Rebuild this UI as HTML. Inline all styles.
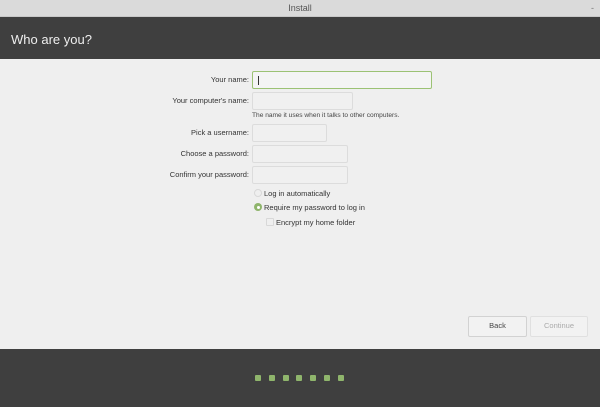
<!DOCTYPE html>
<html><head><style>
*{margin:0;padding:0;box-sizing:border-box}
body{width:600px;height:407px;background:#efefef;font-family:"Liberation Sans","DejaVu Sans",sans-serif;position:relative;overflow:hidden}
.a{position:absolute}
.tb{left:0;top:0;width:600px;height:17px;background:#dadada;border-bottom:1px solid #c8c8c8;text-align:center;font-size:9px;color:#555;line-height:16px}
.hd{left:0;top:17px;width:600px;height:42px;background:#3f3f3f;color:#eee;font-size:13px;padding:15px 0 0 11px}
.ft{left:0;top:349px;width:600px;height:58px;background:#3f3f3f}
.lbl{font-size:7.5px;color:#333;text-align:right;width:140px;left:109px}
.in{background:#f0f0f0;border:1px solid #dcdcdc;border-radius:2px}
.dot{width:6px;height:6px;background:#8fb56c;border-radius:1px;top:375px}
.btn{border:1px solid #d2d2d2;border-radius:2px;background:#f2f2f2;font-size:7.5px;text-align:center;line-height:18px}
.s{font-size:7.5px;color:#333}
</style></head><body>
<div class="a tb">Install<span style="position:absolute;right:6px;color:#777">-</span></div>
<div class="a hd">Who are you?</div>
<div class="a lbl" style="top:75px">Your name:</div>
<div class="a in" style="left:252px;top:71px;width:180px;height:18px;border-color:#9cc274;background:#f4f4f4"><div class="a" style="left:5px;top:4px;width:1px;height:9px;background:#333"></div></div>
<div class="a lbl" style="top:96px">Your computer's name:</div>
<div class="a in" style="left:252px;top:92px;width:101px;height:18px"></div>
<div class="a" style="left:252px;top:112px;font-size:6.6px;color:#444">The name it uses when it talks to other computers.</div>
<div class="a lbl" style="top:128px">Pick a username:</div>
<div class="a in" style="left:252px;top:124px;width:75px;height:18px"></div>
<div class="a lbl" style="top:149px">Choose a password:</div>
<div class="a in" style="left:252px;top:145px;width:96px;height:18px"></div>
<div class="a lbl" style="top:170px">Confirm your password:</div>
<div class="a in" style="left:252px;top:166px;width:96px;height:18px"></div>
<div class="a" style="left:254px;top:189px;width:8px;height:8px;border:1px solid #d8d8d8;border-radius:50%"></div>
<div class="a s" style="left:264px;top:189px">Log in automatically</div>
<div class="a" style="left:254px;top:203px;width:8px;height:8px;background:#8fb56c;border-radius:50%"><div class="a" style="left:2.5px;top:2.5px;width:3px;height:3px;background:#fff;border-radius:50%"></div></div>
<div class="a s" style="left:264px;top:203px">Require my password to log in</div>
<div class="a" style="left:266px;top:218px;width:8px;height:8px;border:1px solid #d8d8d8;border-radius:1px"></div>
<div class="a s" style="left:276px;top:218px">Encrypt my home folder</div>
<div class="a btn" style="left:468px;top:316px;width:59px;height:21px;color:#444">Back</div>
<div class="a btn" style="left:530px;top:316px;width:58px;height:21px;color:#aaa;border-color:#e0e0e0">Continue</div>
<div class="a ft"></div>
<div class="a dot" style="left:255px"></div>
<div class="a dot" style="left:269px"></div>
<div class="a dot" style="left:283px"></div>
<div class="a dot" style="left:296px"></div>
<div class="a dot" style="left:310px"></div>
<div class="a dot" style="left:324px"></div>
<div class="a dot" style="left:338px"></div>
</body></html>
